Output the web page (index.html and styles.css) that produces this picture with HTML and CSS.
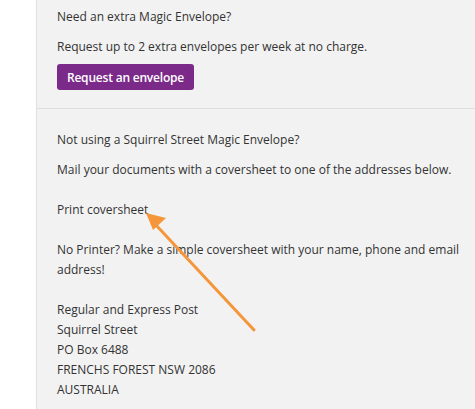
FILE: index.html
```html
<!DOCTYPE html>
<html>
<head>
<meta charset="utf-8">
<link rel="stylesheet" href="styles.css">
</head>
<body>
<div class="page">
  <div class="gutter"></div>
  <div class="panel">
    <section class="block first">
      <p>Need an extra Magic Envelope?</p>
      <p class="before-btn">Request up to 2 extra envelopes per week at no charge.</p>
      <button class="btn">Request an envelope</button>
    </section>
    <section class="block second">
      <p>Not using a Squirrel Street Magic Envelope?</p>
      <p>Mail your documents with a coversheet to one of the addresses below.</p>
      <p class="gap">Print coversheet</p>
      <p class="gap">No Printer? Make a simple coversheet with your name, phone and email address!</p>
      <p class="gap addr">Regular and Express Post<br>Squirrel Street<br>PO Box 6488<br>FRENCHS FOREST NSW 2086<br>AUSTRALIA</p>
    </section>
    <svg class="arrow" width="475" height="409" viewBox="0 0 475 409">
      <line x1="254" y1="330" x2="155" y2="224" stroke="#f5963a" stroke-width="3" stroke-linecap="round"/>
      <polygon points="146,213 166,218 153,230" fill="#f5963a"/>
    </svg>
  </div>
</div>
</body>
</html>
```
FILE: styles.css
```css
html, body {
  margin: 0;
  padding: 0;
  background: #ffffff;
}
body {
  font-family: "Open Sans", "Liberation Sans", sans-serif;
  font-size: 12px;
  color: #333333;
}
.page {
  display: flex;
  width: 475px;
  height: 409px;
  overflow: hidden;
}
.gutter {
  width: 36px;
  flex: none;
  background: #ffffff;
}
.panel {
  flex: 1;
  background: #f2f2f2;
  border-left: 1px solid #e0e0e0;
}
.block {
  padding: 0 4px 0 20px;
}
.block p {
  margin: 0 0 10px 0;
  line-height: 20px;
}
.block p.before-btn {
  margin-bottom: 7px;
}
.first {
  padding-top: 7px;
  padding-bottom: 18px;
  border-bottom: 1px solid #dedede;
}
.second {
  padding-top: 21px;
}
.block p.gap {
  margin-top: 20px;
}
.btn {
  display: block;
  font-family: "Open Sans", "Liberation Sans", sans-serif;
  font-size: 12px;
  font-weight: 600;
  letter-spacing: -0.2px;
  color: #ffffff;
  background: #7b2a89;
  border: none;
  border-radius: 3px;
  height: 26px;
  width: 137px;
  padding: 0;
  margin-top: 0;
}
.arrow {
  position: absolute;
  left: 0;
  top: 0;
  pointer-events: none;
}
```
